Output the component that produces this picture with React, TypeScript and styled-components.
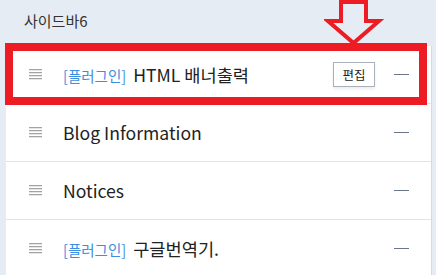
import React from "react";
import styled, { createGlobalStyle } from "styled-components";

const Global = createGlobalStyle`
  html, body { margin: 0; padding: 0; background: #e6ecf3; }
  body { font-family: "Noto Sans CJK KR", "Noto Sans", sans-serif; color: #222; }
`;

const Page = styled.div`
  position: relative;
  width: 436px;
  height: 275px;
  overflow: hidden;
  background: #e6ecf3;
`;

const Header = styled.div`
  height: 46px;
  box-sizing: border-box;
  padding: 10px 0 0 24px;
  font-size: 15px;
  line-height: 22px;
  color: #333;
`;

const Panel = styled.div`
  margin: 0 4px 0 6px;
  background: #fff;
  border-right: 1px solid #d3dbe5;
`;

const Row = styled.div`
  height: 57px;
  display: flex;
  align-items: center;
  padding: 0 22px 0 23px;
  border-bottom: 1px solid #dfe4ea;
`;

const Handle = styled.span`
  width: 13px;
  height: 11px;
  flex: none;
  background: repeating-linear-gradient(
    to bottom,
    #a3a3a3 0px,
    #a3a3a3 1px,
    #e6e6e6 1px,
    #e6e6e6 2px,
    transparent 2px,
    transparent 3px
  );
  margin-right: 21px;
`;

const Label = styled.span`
  flex: 1;
  font-size: 17.6px;
  color: #222;
  white-space: nowrap;
  display: flex;
  align-items: baseline;
  gap: 7px;
`;

const Tag = styled.span`
  font-size: 14.5px;
  color: #3e8ee0;
`;

const EditButton = styled.button`
  width: 42px;
  height: 25px;
  box-sizing: border-box;
  border: 1px solid #a9b1bc;
  background: #fff;
  font-family: inherit;
  font-size: 12.5px;
  color: #222;
  padding: 0;
  margin-right: 19px;
  box-shadow: 0 2px 3px rgba(0, 0, 0, 0.08);
`;

const Minus = styled.span`
  width: 15px;
  height: 1.5px;
  background: #6b7787;
  flex: none;
`;

const Highlight = styled.div`
  position: absolute;
  left: 5px;
  top: 43px;
  width: 422px;
  height: 62px;
  box-sizing: border-box;
  border: 8px solid #ed1c24;
  pointer-events: none;
`;

const ArrowSvg = styled.svg`
  position: absolute;
  left: 324px;
  top: -2px;
  pointer-events: none;
`;

type Item = { tag?: string; name: string; edit?: boolean };

const items: Item[] = [
  { tag: "[플러그인]", name: "HTML 배너출력", edit: true },
  { name: "Blog Information" },
  { name: "Notices" },
  { tag: "[플러그인]", name: "구글번역기." },
];

export default function App() {
  return (
    <Page>
      <Global />
      <Header>사이드바6</Header>
      <Panel>
        {items.map((it) => (
          <Row key={it.name}>
            <Handle />
            <Label>
              {it.tag && <Tag>{it.tag}</Tag>}
              <span>{it.name}</span>
            </Label>
            {it.edit && <EditButton>편집</EditButton>}
            <Minus />
          </Row>
        ))}
      </Panel>
      <Highlight />
      <ArrowSvg width="60" height="50" viewBox="0 0 60 50">
        <polygon
          points="17,4 42,4 42,23 55,23 29.5,45 4,23 17,23"
          fill="none"
          stroke="#ed1c24"
          strokeWidth="4"
          strokeLinejoin="miter"
        />
      </ArrowSvg>
    </Page>
  );
}
